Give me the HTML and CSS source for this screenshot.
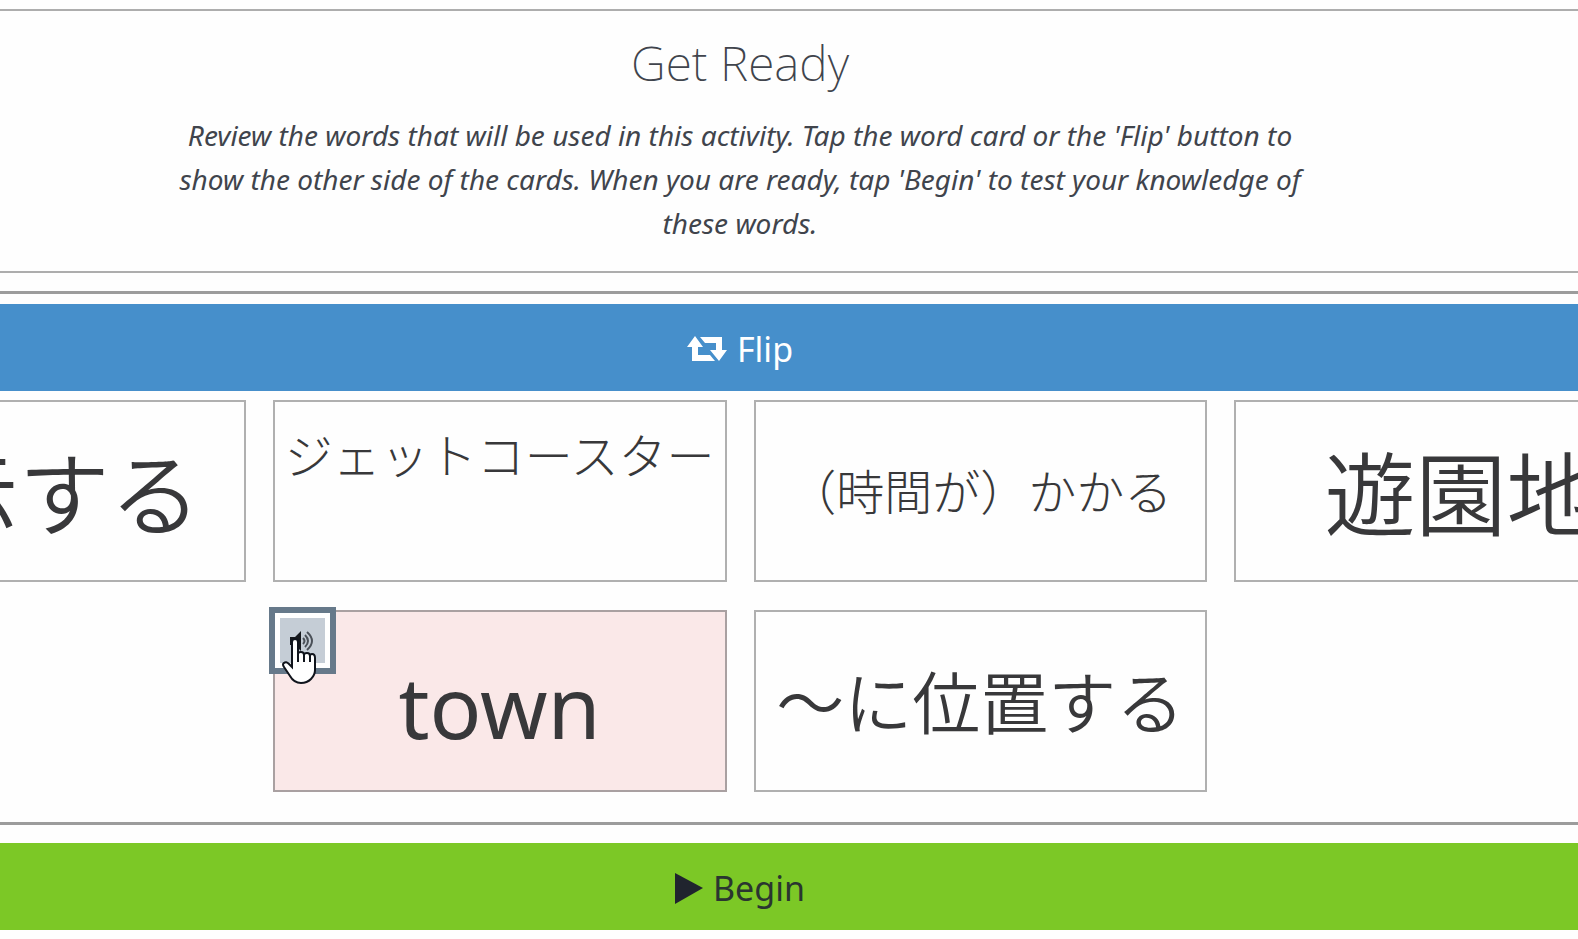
FILE: index.html
```html
<!DOCTYPE html>
<html lang="en">
  <head>
    <meta charset="UTF-8" />
    <meta name="viewport" content="width=device-width, initial-scale=1.0" />
    <title>Get Ready</title>
    <link rel="stylesheet" href="styles.css">
  </head>
  <body>
    <div class="activity">
      <header class="intro">
        <h1>Get Ready</h1>
        <p>
          Review the words that will be used in this activity. Tap the word card
          or the 'Flip' button to show the other side of the cards. When you are
          ready, tap 'Begin' to test your knowledge of these words.
        </p>
      </header>

      <main class="review">
        <button type="button" class="bar flip">
          <svg class="flip-icon" viewBox="0 0 40 26" aria-hidden="true">
            <path d="M8 0 L16 11 H11 V19 H23 L28 25 H5 V11 H0 Z" />
            <path d="M13 1 H35 V14 H40 L32 25 L23 14 H29 V7 H18 Z" />
          </svg>
          <span>Flip</span>
        </button>

        <div class="cards" lang="ja">
          <div class="card large">展示する</div>
          <div class="card small top">ジェットコースター</div>
          <div class="card small">（時間が）かかる</div>
          <div class="card large">遊園地</div>
          <div class="card flipped" lang="en">
            <button type="button" class="audio" aria-label="Play audio">
              <svg viewBox="0 0 26 22" aria-hidden="true">
                <path class="speaker" d="M1 7 H6 L12 1 V21 L6 15 H1 Z" />
                <path class="wave" d="M14 8 Q17 11 14 14 M16 5 Q22 11 16 17 M18 2 Q28 11 18 20" />
              </svg>
            </button>
            town
            <svg class="pointer" viewBox="0 0 34 46" aria-hidden="true">
              <path d="M10 4 Q10 1 13 1 Q16 1 16 4 V16 Q16 14 19 14 Q22 14 22 17 Q22 15 25 15 Q28 15 28 18 Q28 16 30 16 Q33 16 33 20 V32 Q33 37 29 41 Q25 45 19 45 Q12 45 8 38 L2 29 Q0 26 2 25 Q4 23 7 26 L10 29 Z" />
              <path d="M16 16 V24 M22 17 V24 M28 18 V24" />
            </svg>
          </div>
          <div class="card medium">～に位置する</div>
        </div>
      </main>

      <button type="button" class="bar begin">
        <svg class="play-icon" viewBox="0 0 28 31" aria-hidden="true">
          <path d="M0 0 L28 15 L0 31 Z" />
        </svg>
        <span>Begin</span>
      </button>
    </div>
  </body>
</html>
```

FILE: styles.css
```css
* {
  box-sizing: border-box;
}

body {
  margin: 0;
  background: #fefefe;
  color: #38383a;
  font-family: "Noto Sans", "Noto Sans CJK JP", sans-serif;
  overflow-x: hidden;
}

/* the activity is wider than the window and runs off both sides */
.activity {
  margin: 9px -110px 0 -208px;
}

.intro {
  padding: 16px 24px 26px;
  border-top: 2px solid #adadad;
  border-bottom: 2px solid #adadad;
  color: #40444c;
  text-align: center;
}

h1 {
  margin: 0 0 14px;
  font-size: 48px;
  font-weight: 200;
  line-height: 72px;
}

.intro p {
  max-width: 1160px;
  margin: 0 auto;
  font-size: 28px;
  font-style: italic;
  line-height: 44px;
}

.review {
  margin-top: 18px;
  padding: 10px 0 30px;
  border-top: 3px solid #9c9c9c;
  border-bottom: 3px solid #9c9c9c;
}

.bar {
  display: flex;
  align-items: center;
  justify-content: center;
  gap: 10px;
  width: 100%;
  height: 87px;
  padding: 3px 0 0;
  border: none;
  font-family: inherit;
  font-size: 34px;
  cursor: pointer;
}

.flip {
  background: #468fcb;
  color: #fff;
}

.flip-icon {
  width: 40px;
  height: 26px;
  fill: #fff;
}

.begin {
  margin: 18px 0 9px;
  background: #7cc826;
  color: #2a3530;
}

.play-icon {
  width: 28px;
  height: 31px;
  fill: #20242e;
}

.cards {
  display: grid;
  grid-template-columns: repeat(4, 1fr);
  gap: 28px 27px;
  margin-top: 9px;
}

.card {
  position: relative;
  display: flex;
  align-items: center;
  justify-content: center;
  height: 182px;
  padding-bottom: 4px;
  border: 2px solid #b0b0b0;
  font-family: "Noto Sans CJK JP", sans-serif;
  white-space: nowrap;
}

.large {
  font-size: 91px;
  font-weight: 350;
}

.medium {
  font-size: 68px;
  font-weight: 350;
}

.small {
  font-size: 48px;
  font-weight: 300;
}

.top {
  padding-bottom: 76px;
}

.flipped {
  grid-column: 2;
  padding: 8px 0 0;
  border-color: #a9a0a1;
  background: #fae8e8;
  font-family: "Noto Sans", sans-serif;
  font-size: 86px;
}

.audio {
  position: absolute;
  top: -5px;
  left: -6px;
  display: flex;
  align-items: center;
  justify-content: center;
  width: 67px;
  height: 67px;
  padding: 0;
  border: 6px solid #66798a;
  background: #c5cdd6;
  box-shadow: inset 0 0 0 5px #fff;
  cursor: pointer;
}

.audio svg {
  width: 26px;
  height: 22px;
}

.speaker {
  fill: #15181d;
}

.wave {
  fill: none;
  stroke: #4a5058;
  stroke-width: 2;
}

.pointer {
  position: absolute;
  top: 26px;
  left: 7px;
  width: 34px;
  height: 46px;
  fill: #fff;
  stroke: #10141c;
  stroke-width: 2;
}
```
